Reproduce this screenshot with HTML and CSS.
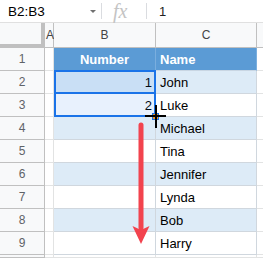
FILE: index.html
```html
<!DOCTYPE html>
<html>
<head>
<meta charset="utf-8">
<link rel="stylesheet" href="styles.css">
</head>
<body>
<div class="app">
  <div class="fbar">
    <div class="namebox">B2:B3</div>
    <div class="caret"></div>
    <div class="vdiv"></div>
    <div class="fx">fx</div>
    <div class="vdiv"></div>
    <div class="fval">1</div>
  </div>
  <div class="sheet">
    <div class="corner"></div>
    <div class="ch cha">A</div>
    <div class="ch">B</div>
    <div class="ch">C</div>
    <div class="ch chd"></div>

    <div class="rh">1</div><div class="ca"></div><div class="th thc">Number</div><div class="th">Name</div><div class="cd"></div>
    <div class="rh">2</div><div class="ca"></div><div class="tc num blue">1</div><div class="tc blue">John</div><div class="cd"></div>
    <div class="rh">3</div><div class="ca"></div><div class="tc num">2</div><div class="tc">Luke</div><div class="cd"></div>
    <div class="rh">4</div><div class="ca"></div><div class="tc blue"></div><div class="tc blue">Michael</div><div class="cd"></div>
    <div class="rh">5</div><div class="ca"></div><div class="tc"></div><div class="tc">Tina</div><div class="cd"></div>
    <div class="rh">6</div><div class="ca"></div><div class="tc blue"></div><div class="tc blue">Jennifer</div><div class="cd"></div>
    <div class="rh">7</div><div class="ca"></div><div class="tc"></div><div class="tc">Lynda</div><div class="cd"></div>
    <div class="rh">8</div><div class="ca"></div><div class="tc blue"></div><div class="tc blue">Bob</div><div class="cd"></div>
    <div class="rh">9</div><div class="ca"></div><div class="tc"></div><div class="tc">Harry</div><div class="cd"></div>
    <div class="rh"></div><div class="ca"></div><div class="ce"></div><div class="ce"></div><div class="cd"></div>
  </div>

  <div class="sel"></div>
  <div class="act"></div>
  <div class="handle"></div>

  <svg class="overlay" width="263" height="258" viewBox="0 0 263 258">
    <line x1="141" y1="125" x2="141" y2="228" stroke="#f2434e" stroke-width="5" stroke-linecap="round"/>
    <polygon points="141,244 149.5,226 141,230 132.5,226" fill="#f2434e"/>
    <g>
      <rect x="145" y="115" width="21" height="2" fill="#000"/>
      <rect x="155" y="105" width="2" height="23" fill="#000"/>
    </g>
  </svg>
</div>
</body>
</html>
```
FILE: styles.css
```css
* { box-sizing: border-box; }
body {
  margin: 0;
  width: 263px;
  height: 258px;
  overflow: hidden;
  background: #fff;
  font-family: "Liberation Sans", Arial, sans-serif;
}
.app { position: relative; width: 263px; height: 258px; overflow: hidden; }

.fbar {
  display: flex;
  align-items: center;
  height: 23px;
  border-bottom: 1px solid #e0e0e0;
}
.namebox {
  width: 90px;
  padding-left: 8px;
  font-size: 13.5px;
  color: #000;
}
.caret {
  width: 0; height: 0;
  border-left: 3px solid transparent;
  border-right: 3px solid transparent;
  border-top: 3px solid #707070;
  margin-right: 5px;
}
.vdiv { width: 1px; height: 16px; background: #dadce0; }
.fx {
  width: 44px;
  padding-left: 11px;
  font-family: "Liberation Serif", serif;
  font-style: italic;
  font-size: 20px;
  color: #c4c4c4;
  line-height: 22px;
}
.fval { padding-left: 12px; font-size: 13px; color: #222; }

.sheet {
  display: grid;
  grid-template-columns: 45px 9px 102px 101px 1fr;
  grid-template-rows: 25px repeat(9, 23px) 1fr;
  height: 235px;
}
.corner {
  background: #f8f9fa;
  border-right: 4px solid #c0c0c0;
  border-bottom: 4px solid #c0c0c0;
}
.ch {
  background: #f8f9fa;
  border-right: 1px solid #c0c0c0;
  border-bottom: 1px solid #c0c0c0;
  display: flex;
  align-items: center;
  justify-content: center;
  font-size: 12px;
  color: #444;
}
.cha { justify-content: flex-start; padding-left: 1px; }
.chd { border-right: none; }
.rh {
  background: #f8f9fa;
  border-right: 1px solid #c0c0c0;
  border-bottom: 1px solid #c0c0c0;
  display: flex;
  align-items: center;
  justify-content: center;
  font-size: 12px;
  color: #5f6368;
}
.ca { border-right: 1px solid #e2e3e3; border-bottom: 1px solid #e2e3e3; }
.cd { border-bottom: 1px solid #e2e3e3; }
.ce { border-right: 1px solid #e2e3e3; border-bottom: 1px solid #e2e3e3; }
.th {
  background: #5b9bd5;
  color: #fff;
  font-weight: bold;
  font-size: 13px;
  display: flex;
  align-items: center;
  padding-left: 4px;
  border-right: 1px solid #7aaede;
  border-bottom: 1px solid #c9d6e3;
}
.thc { justify-content: center; padding-left: 0; }
.tc {
  font-size: 13px;
  color: #000;
  display: flex;
  align-items: center;
  padding-left: 4px;
  border-right: 1px solid #d0d7de;
  border-bottom: 1px solid #d0d7de;
}
.blue { background: #ddebf7; }
.num { justify-content: flex-end; padding-right: 3px; padding-left: 0; }

.sel {
  position: absolute;
  left: 54px; top: 70px;
  width: 102px; height: 47px;
  border: 2px solid #1a73e8;
  background: rgba(26,115,232,0.1);
}
.act {
  position: absolute;
  left: 54px; top: 70px;
  width: 102px; height: 24px;
  border: 2px solid #1a73e8;
}
.handle {
  position: absolute;
  left: 152px; top: 113px;
  width: 7px; height: 7px;
  background: #e8912a;
  border: 1px solid #1a73e8;
}
.overlay { position: absolute; left: 0; top: 0; pointer-events: none; }
```
